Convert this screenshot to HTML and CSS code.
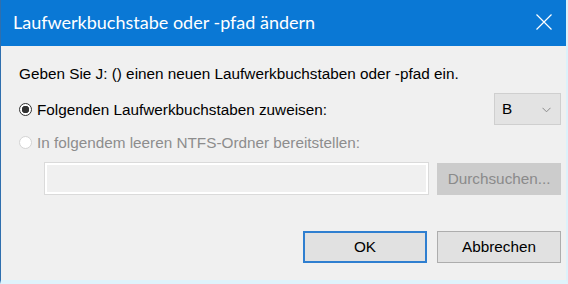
FILE: index.html
```html
<!DOCTYPE html>
<html lang="de">
<head>
<meta charset="utf-8">
<title>Laufwerkbuchstabe oder -pfad ändern</title>
<link rel="stylesheet" href="styles.css">
</head>
<body>
<div class="window">
  <div class="titlebar">
    <span class="title">Laufwerkbuchstabe oder -pfad ändern</span>
    <span class="close">
      <svg width="16" height="16" viewBox="0 0 16 16"><path d="M0.5 0.5 L15.5 15.5 M15.5 0.5 L0.5 15.5" stroke="#fff" stroke-width="1.2" fill="none"/></svg>
    </span>
  </div>
  <div class="content">
    <div class="intro">Geben Sie J: () einen neuen Laufwerkbuchstaben oder -pfad ein.</div>
    <div class="row row-letter">
      <span class="radio checked"></span>
      <span class="label">Folgenden Laufwerkbuchstaben zuweisen:</span>
      <div class="combo">
        <span class="combo-value">B</span>
        <svg class="chev" width="9" height="6" viewBox="0 0 9 6"><path d="M0.5 0.8 L4.5 4.8 L8.5 0.8" stroke="#8a8a8a" stroke-width="1" fill="none"/></svg>
      </div>
    </div>
    <div class="row row-folder">
      <span class="radio disabled"></span>
      <span class="label disabled-text">In folgendem leeren NTFS-Ordner bereitstellen:</span>
    </div>
    <div class="row row-path">
      <div class="path-input"></div>
      <div class="btn btn-disabled">Durchsuchen...</div>
    </div>
    <div class="row row-actions">
      <div class="btn btn-default">OK</div>
      <div class="btn">Abbrechen</div>
    </div>
  </div>
</div>
</body>
</html>
```
FILE: styles.css
```css
html, body {
  margin: 0;
  padding: 0;
}
body {
  width: 568px;
  height: 284px;
  overflow: hidden;
  background: #f0f0f0;
  font-family: "Liberation Sans", Arial, sans-serif;
  font-size: 15.3px;
  color: #000;
}
.window {
  box-sizing: border-box;
  width: 568px;
  height: 284px;
  display: flex;
  flex-direction: column;
  background: #f0f0f0;
  border-left: 1px solid #2f6fae;
  border-right: 2px solid #dcf1fa;
  border-bottom: 4px solid #dff3fb;
}
.titlebar {
  height: 46px;
  flex: none;
  background: #0a78d5;
  display: flex;
  align-items: center;
  justify-content: space-between;
  padding: 0 14px 0 12px;
}
.title {
  font-family: Lato, "Noto Sans", sans-serif;
  font-size: 18px;
  color: #fff;
  margin-top: -2px;
}
.close {
  display: flex;
  width: 16px;
  height: 16px;
  margin-top: -2px;
}
.content {
  flex: 1;
  display: flex;
  flex-direction: column;
  padding: 0 5px 0 18px;
}
.intro {
  line-height: 17px;
  margin-top: 19px;
}
.row {
  display: flex;
  align-items: center;
}
.row-letter {
  margin-top: 11px;
  height: 32px;
}
.radio {
  box-sizing: border-box;
  width: 13px;
  height: 13px;
  border-radius: 50%;
  flex: none;
  margin-right: 5px;
  background: #fff;
}
.radio.checked {
  border: 1px solid #333;
  background: radial-gradient(circle, #333 0 3.5px, #fff 4px);
}
.radio.disabled {
  border: 1px solid #d4d4d4;
}
.label {
  line-height: 17px;
}
.disabled-text {
  color: #8d8d8d;
}
.combo {
  box-sizing: border-box;
  margin-left: auto;
  width: 67px;
  height: 32px;
  background: #e3e3e3;
  border: 1px solid #cfcfcf;
  display: flex;
  align-items: center;
  justify-content: space-between;
  padding: 0 9px 0 7px;
}
.chev {
  display: block;
  margin-top: 1px;
}
.row-folder {
  margin-top: 9px;
}
.row-path {
  margin-top: 11px;
}
.path-input {
  box-sizing: border-box;
  margin-left: 25px;
  width: 386px;
  height: 33px;
  border: 1px solid #dadada;
  box-shadow: inset 0 0 0 2px #fff;
  background: #f0f0f0;
}
.btn {
  box-sizing: border-box;
  width: 124px;
  height: 32px;
  display: flex;
  align-items: center;
  justify-content: center;
  background: #e1e1e1;
  border: 1px solid #adadad;
}
.btn-disabled {
  margin-left: 8px;
  background: #cccccc;
  border-color: #cccccc;
  color: #8a8a8a;
}
.btn-default {
  border: 2px solid #2f7fd0;
}
.row-actions {
  margin-top: 36px;
  justify-content: flex-end;
  gap: 10px;
}
```
